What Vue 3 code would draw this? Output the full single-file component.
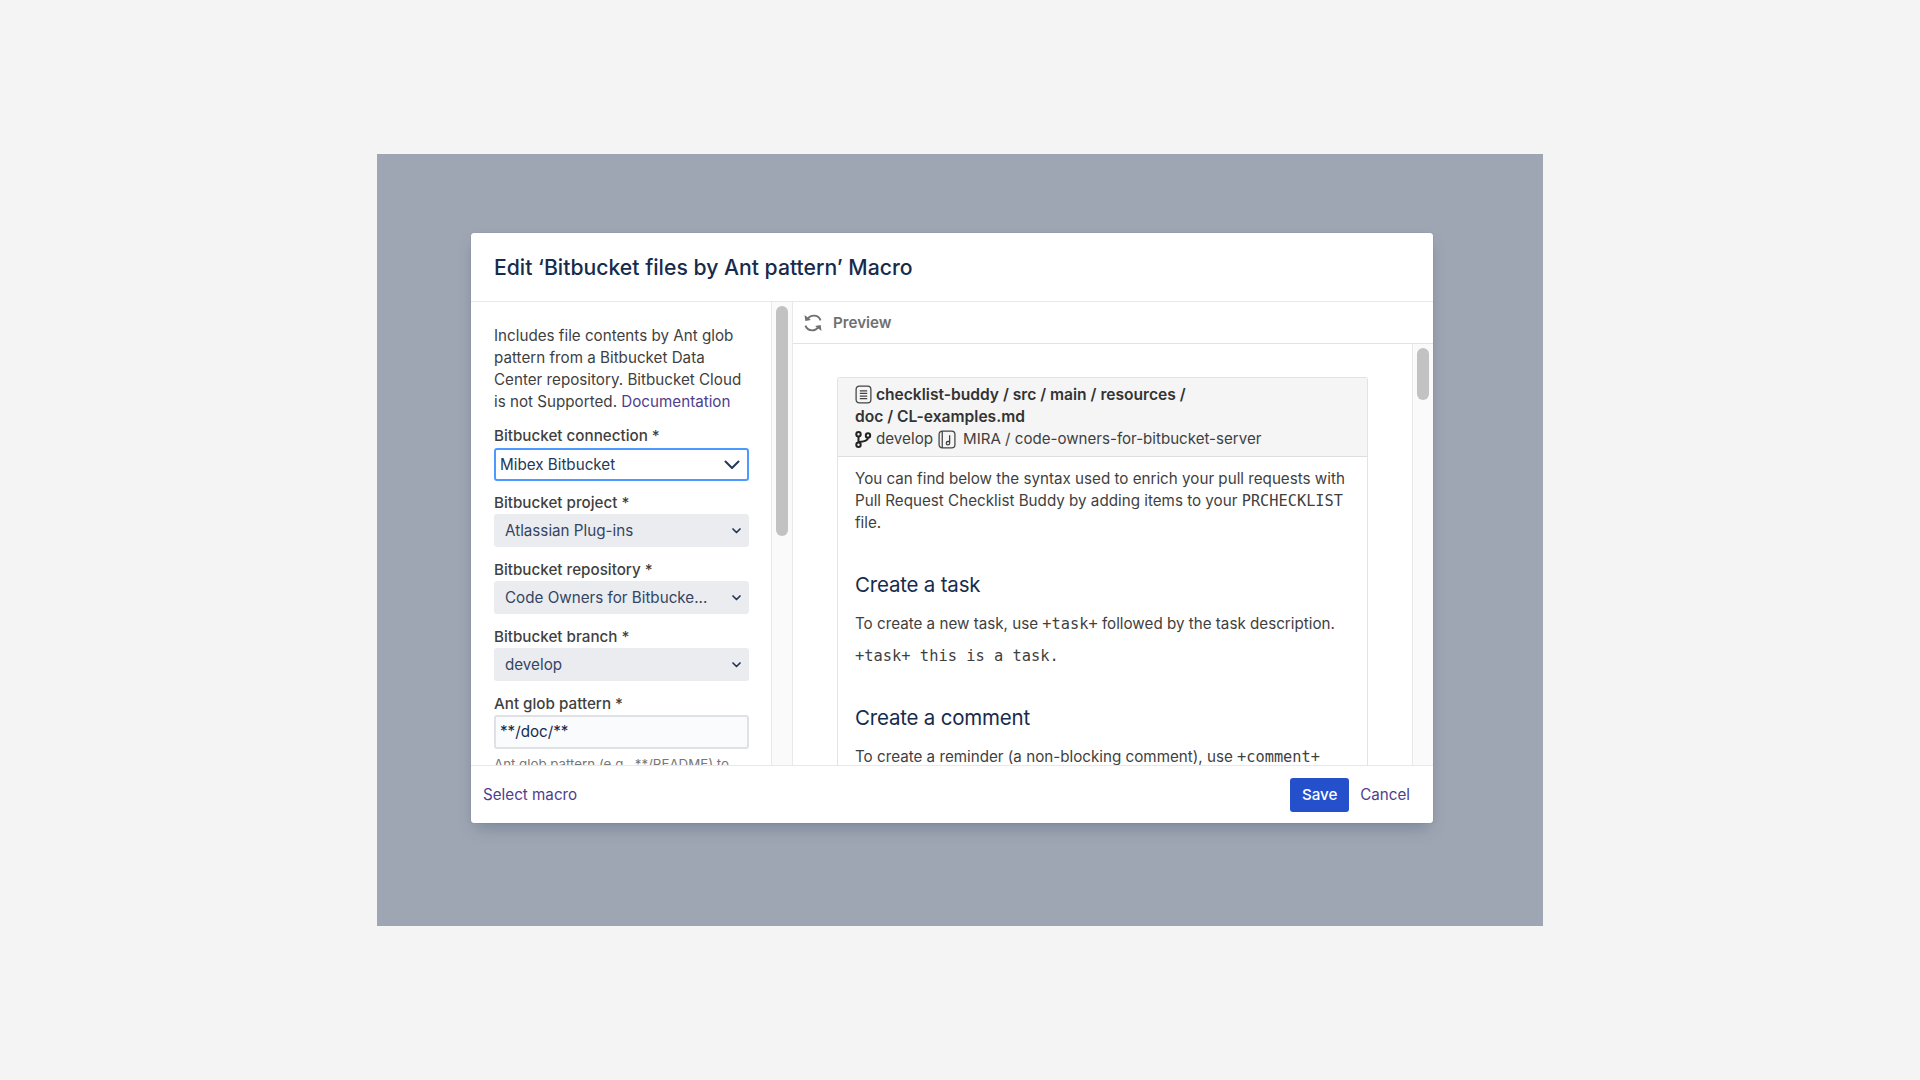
<template>
  <div class="page">
    <div class="backdrop">
      <div class="dialog">
        <header class="dialog-head">
          <h1>Edit ‘Bitbucket files by Ant pattern’ Macro</h1>
        </header>

        <div class="dialog-body">
          <!-- left: macro form -->
          <section class="form-panel">
            <p class="intro">
              Includes file contents by Ant glob pattern from a Bitbucket Data
              Center repository. Bitbucket Cloud is not Supported.
              <a class="link">Documentation</a>
            </p>

            <div class="field">
              <label>Bitbucket connection *</label>
              <div class="select-focus">
                <span>Mibex Bitbucket</span>
                <svg width="16" height="10" viewBox="0 0 16 10">
                  <path d="M1.5 1.5 8 8l6.5-6.5" fill="none" stroke="#253858" stroke-width="2" stroke-linecap="round" stroke-linejoin="round" />
                </svg>
              </div>
            </div>

            <div v-for="item in selects" :key="item.label" class="field">
              <label>{{ item.label }}</label>
              <div class="select-grey">
                <span>{{ item.value }}</span>
                <svg width="9" height="6" viewBox="0 0 9 6">
                  <path d="M1 1l3.5 3.5L8 1" fill="none" stroke="#253858" stroke-width="1.7" stroke-linecap="round" stroke-linejoin="round" />
                </svg>
              </div>
            </div>

            <div class="field">
              <label>Ant glob pattern *</label>
              <div class="text-input">**/doc/**</div>
            </div>
            <p class="hint">Ant glob pattern (e.g., **/README) to</p>
          </section>

          <div class="scrollbar form-scrollbar"><div class="thumb"></div></div>

          <!-- right: preview -->
          <section class="preview-panel">
            <div class="preview-head">
              <svg width="20" height="20" viewBox="0 0 18 18" fill="none" stroke="#707070" stroke-width="1.7">
                <path d="M15.8 6.6C14.9 4.1 12.5 2.4 9.7 2.4 7.6 2.4 5.8 3.3 4.5 4.9" />
                <path d="M2.2 11.4c.9 2.5 3.3 4.2 6.1 4.2 2.1 0 3.9-.9 5.2-2.5" />
                <path d="M1.4 1.8 2.1 7.2l5-1z" fill="#707070" stroke="none" />
                <path d="M16.6 16.2 15.9 10.8l-5 1z" fill="#707070" stroke="none" />
              </svg>
              <span>Preview</span>
            </div>

            <div class="preview-main">
              <div class="preview-content">
                <article class="card">
                  <div class="card-head">
                    <div class="card-path">
                      <svg class="file-icon" width="17" height="19" viewBox="0 0 16 18" fill="none" stroke="#444" stroke-width="1.2">
                        <rect x="1" y="1" width="14" height="16" rx="3" />
                        <path d="M4.5 5.5h7M4.5 8h7M4.5 10.5h7M4.5 13h7" />
                      </svg>
                      checklist-buddy / src / main / resources /<br />doc / CL-examples.md
                    </div>
                    <div class="card-meta">
                      <svg width="17" height="17" viewBox="0 0 17 17" fill="none" stroke="#222" stroke-width="2">
                        <circle cx="3.5" cy="3.2" r="2.2" />
                        <circle cx="3.5" cy="13.8" r="2.2" />
                        <circle cx="13" cy="4.4" r="2.2" />
                        <path d="M3.5 5.4v6.2M13 6.6c0 3.2-3.5 3.6-9.5 4.6" />
                      </svg>
                      <span class="branch">develop</span>
                      <svg width="18" height="19" viewBox="0 0 17 18" fill="none" stroke="#444" stroke-width="1.2">
                        <rect x="1" y="1" width="15" height="16" rx="3" />
                        <path d="M4 1v16M11 5v7.5a1.6 1.6 0 1 1-1.6-1.6H11" />
                      </svg>
                      <span class="repo">MIRA / code-owners-for-bitbucket-server</span>
                    </div>
                  </div>
                  <div class="card-body">
                    <p>
                      You can find below the syntax used to enrich your pull requests
                      with Pull Request Checklist Buddy by adding items to your
                      <code>PRCHECKLIST</code> file.
                    </p>
                    <h2>Create a task</h2>
                    <p>To create a new task, use <code>+task+</code> followed by the task description.</p>
                    <pre>+task+ this is a task.</pre>
                    <h2>Create a comment</h2>
                    <p>To create a reminder (a non-blocking comment), use <code>+comment+</code></p>
                  </div>
                </article>
              </div>
              <div class="scrollbar preview-scrollbar"><div class="thumb"></div></div>
            </div>
          </section>
        </div>

        <footer class="dialog-foot">
          <a class="link">Select macro</a>
          <div class="actions">
            <button class="save">Save</button>
            <a class="link">Cancel</a>
          </div>
        </footer>
      </div>
    </div>
  </div>
</template>

<script setup>
const selects = [
  { label: "Bitbucket project *", value: "Atlassian Plug-ins" },
  { label: "Bitbucket repository *", value: "Code Owners for Bitbucke..." },
  { label: "Bitbucket branch *", value: "develop" },
];
</script>

<style>
html,
body {
  margin: 0;
  background: #f4f4f4;
}
</style>

<style scoped>
.page {
  width: 1920px;
  height: 1080px;
  display: flex;
  align-items: center;
  justify-content: center;
  background: #f4f4f4;
  font-family: Inter, "Liberation Sans", sans-serif;
  font-size: 15.2px;
  line-height: 22px;
  color: #3f3f3f;
  overflow: hidden;
}

.backdrop {
  width: 1166px;
  height: 772px;
  box-sizing: border-box;
  padding: 79px 0 0 94px;
  background: #9fa6b3;
}

.dialog {
  width: 962px;
  height: 590px;
  display: flex;
  flex-direction: column;
  background: #fff;
  border-radius: 3px;
  box-shadow: 0 8px 16px -4px rgba(9, 30, 66, 0.25), 0 0 1px rgba(9, 30, 66, 0.31);
  overflow: hidden;
}

.dialog-head {
  height: 68px;
  flex: none;
  display: flex;
  align-items: center;
  padding-left: 23px;
  border-bottom: 1px solid #e6e8ee;
}

h1 {
  margin: 0;
  font-size: 21.2px;
  font-weight: 500;
  color: #172b4d;
}

.dialog-body {
  flex: 1;
  min-height: 0;
  display: flex;
}

.form-panel {
  width: 300px;
  flex: none;
  box-sizing: border-box;
  padding: 23px 22px 0 23px;
  overflow: hidden;
}

.intro {
  margin: 0 0 12.4px;
  padding-right: 1px;
}

.link {
  color: #503e8c;
}

.field {
  margin-bottom: 11.9px;
}

label {
  display: block;
  font-weight: 500;
  height: 22px;
  color: #3f3f3f;
}

.select-focus {
  height: 33px;
  margin: 1px 0 -1px;
  box-sizing: border-box;
  display: flex;
  align-items: center;
  justify-content: space-between;
  padding: 0 7px 0 4px;
  border: 2px solid #4c9aff;
  border-radius: 3px;
  color: #253858;
}

.select-grey {
  height: 33px;
  box-sizing: border-box;
  display: flex;
  align-items: center;
  justify-content: space-between;
  padding: 0 8px 0 11px;
  border-radius: 3px;
  background: #ebecf0;
  color: #344563;
}

.text-input {
  height: 34px;
  box-sizing: border-box;
  padding: 1px 4px 0;
  display: flex;
  align-items: center;
  border: 2px solid #dfe1e6;
  border-radius: 3px;
  background: #fafbfc;
  color: #172b4d;
}

.hint {
  margin: -8px 0 0;
  font-size: 13.3px;
  color: #777;
  white-space: nowrap;
}

.scrollbar {
  flex: none;
  box-sizing: border-box;
  background: #fafafa;
  border-left: 1px solid #e8e8e8;
  border-right: 1px solid #e8e8e8;
}

.thumb {
  background: #c2c2c2;
  border-radius: 6px;
}

.form-scrollbar {
  width: 22px;
  padding: 4px 4px 0;
}

.form-scrollbar .thumb {
  height: 230px;
}

.preview-panel {
  flex: 1;
  min-width: 0;
  display: flex;
  flex-direction: column;
}

.preview-head {
  height: 42px;
  flex: none;
  box-sizing: border-box;
  display: flex;
  align-items: center;
  gap: 10px;
  padding-left: 10px;
  border-bottom: 1px solid #e2e3e8;
  font-weight: 600;
  color: #707070;
}

.preview-main {
  flex: 1;
  min-height: 0;
  display: flex;
}

.preview-content {
  flex: 1;
  min-width: 0;
  overflow: hidden;
  padding: 33px 44px 0;
}

.preview-scrollbar {
  width: 21px;
  padding: 4px 4px 0;
  border-right: 0;
}

.preview-scrollbar .thumb {
  height: 52px;
}

.card {
  border: 1px solid #e2e3e6;
  border-radius: 3px 3px 0 0;
  border-bottom: 0;
}

.card-head {
  height: 79px;
  box-sizing: border-box;
  padding: 6px 17px 0;
  background: #f5f5f5;
  border-bottom: 1px solid #dedede;
}

.card-path {
  font-weight: 600;
  font-size: 15.6px;
  color: #333;
}

.file-icon {
  vertical-align: -4px;
}

.card-meta {
  display: flex;
  align-items: center;
  gap: 4px;
  white-space: nowrap;
}

.branch {
  margin-right: 1px;
}

.repo {
  margin-left: 3px;
  font-size: 15.1px;
}

.card-body {
  padding: 11px 17px 0;
}

.card-body p {
  margin: 0;
}

code,
pre {
  font-family: "DejaVu Sans Mono", "Liberation Mono", monospace;
}

code {
  font-size: 15.3px;
}

pre {
  margin: 10px 0 0;
  font-size: 15.4px;
  font-weight: 400;
}

h2 {
  margin: 37px 0 14px;
  font-size: 20.5px;
  line-height: 28px;
  font-weight: 400;
  color: #172b4d;
  letter-spacing: -0.2px;
}

.dialog-foot {
  height: 58px;
  flex: none;
  box-sizing: border-box;
  display: flex;
  align-items: center;
  justify-content: space-between;
  padding: 0 23px 0 12px;
  border-top: 1px solid #e6e8ee;
}

.actions {
  display: flex;
  align-items: center;
  gap: 11px;
}

.save {
  height: 34px;
  width: 59px;
  padding: 0;
  border: 0;
  border-radius: 3px;
  background: #2450cc;
  color: #fff;
  font: 500 15.2px Inter, "Liberation Sans", sans-serif;
}
</style>
